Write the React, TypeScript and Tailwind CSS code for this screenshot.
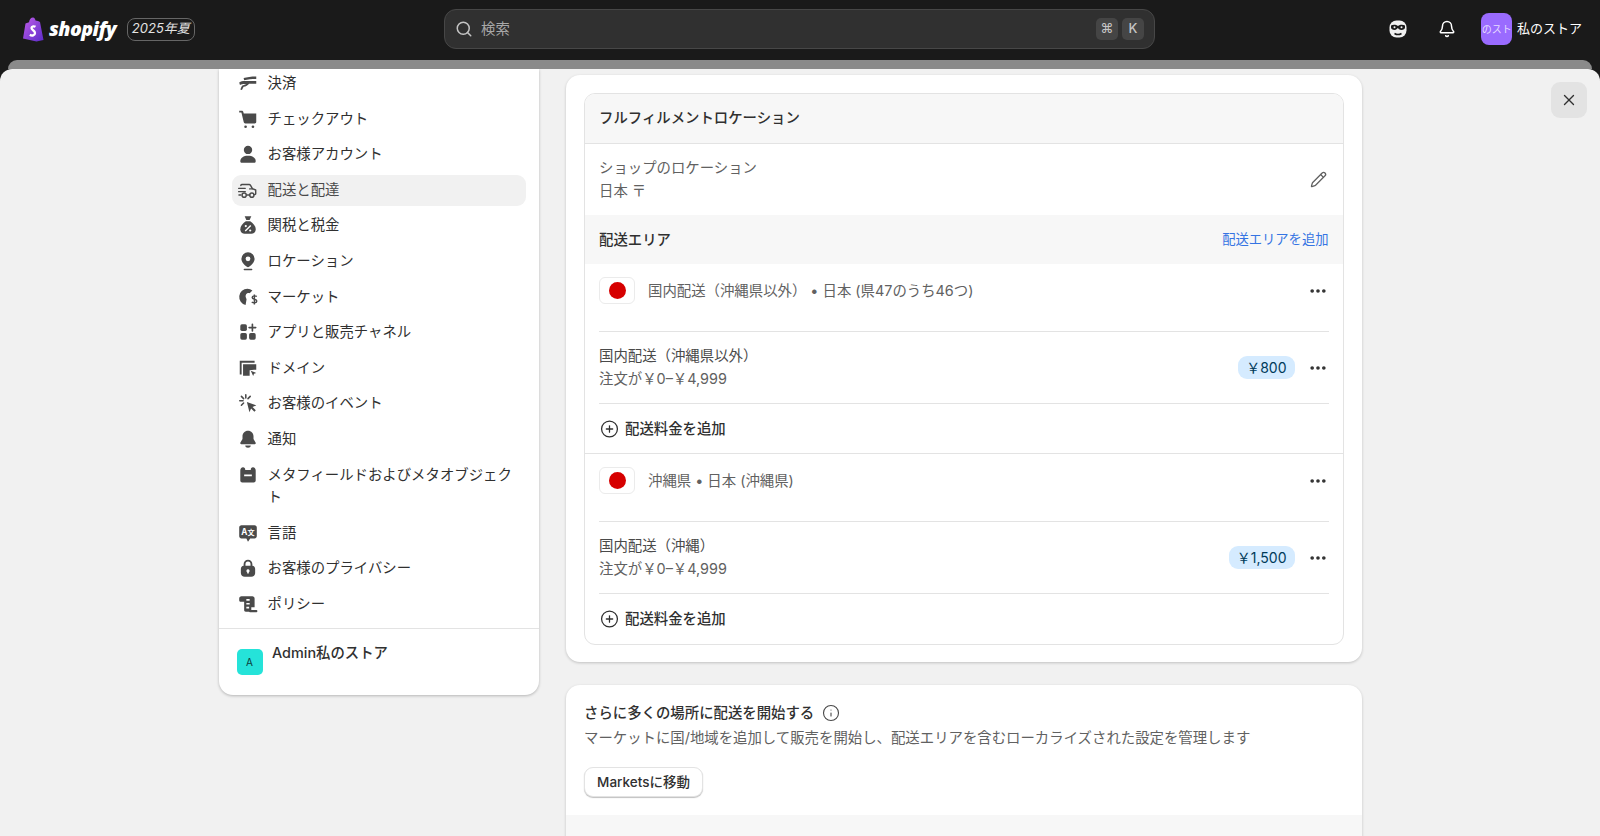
import { ReactNode } from 'react'
import { Search, Bell, X, Pencil, Ellipsis, CirclePlus, Info } from 'lucide-react'

const C = '#4a4a4a'

function Ico({ children }: { children: ReactNode }) {
  return (
    <svg viewBox="0 0 20 20" className="h-[22px] w-[22px] shrink-0" fill={C}>
      {children}
    </svg>
  )
}

const icons: Record<string, ReactNode> = {
  payment: (
    <Ico>
      <path d="M6 5.500c3-1 7-1.500 11.500-1.500v2.300c-4 0-7.500.3-11 1.200z" />
      <path d="M2 9.500c1.500-1 3-1.300 5-1.300h10.500v2.400H11c-1 1.500-3 2.400-5 2.800l-1.500 3-1.500-.6 1.500-3.400 4-1.600H7c-1.800 0-3 .3-4.300 1z" />
    </Ico>
  ),
  cart: (
    <Ico>
      <path d="M2 2.500h2.300c.7 0 1.200.4 1.400 1l.4 1.500h11.400v7.500c0 .8-.6 1.500-1.500 1.500H7.500c-.7 0-1.300-.5-1.400-1.200L4 4.200H2z" />
      <circle cx="7.800" cy="17" r="1.200" />
      <circle cx="14.500" cy="17" r="1.200" />
    </Ico>
  ),
  person: (
    <Ico>
      <circle cx="10" cy="6.300" r="3.800" />
      <path d="M3 16.500c0-3.200 3-5 7-5s7 1.800 7 5c0 .8-.6 1.500-1.500 1.500h-11C3.600 18 3 17.300 3 16.500z" />
    </Ico>
  ),
  truck: (
    <Ico>
      <g fill="none" stroke={C} strokeWidth="1.300" strokeLinecap="round" strokeLinejoin="round">
        <path d="M3.500 6V5.800c0-.5.400-.8.800-.8H11c.6 0 1 .3 1.300.8l1.700 3 3 1.200v3.500c0 .4-.3.7-.7.700h-.8" />
        <path d="M1.500 8.500h6M1.500 11.500h6M11.500 9H14" />
        <path d="M8.800 14.500h2.700M1.800 14.500h1.700" />
        <circle cx="6.500" cy="14.700" r="1.900" />
        <circle cx="13.500" cy="14.700" r="1.900" />
      </g>
    </Ico>
  ),
  bag: (
    <Ico>
      <path d="M7 2h6l-1.500 3.500h-3z" />
      <path d="M8 6.500h4c3 1.800 5 4.500 5 7.500 0 2.500-2 4-4 4H7c-2 0-4-1.500-4-4 0-3 2-5.700 5-7.500z" />
      <path d="M12.500 10.500l-5 5" stroke="#fff" strokeWidth="1.300" />
      <circle cx="8" cy="11" r="1" fill="#fff" />
      <circle cx="12" cy="15" r="1" fill="#fff" />
    </Ico>
  ),
  pin: (
    <Ico>
      <path fillRule="evenodd" d="M10 2a6 6 0 0 1 6 6c0 3-2.500 5.500-5 7.300-.6.400-1.400.4-2 0C6.500 13.500 4 11 4 8a6 6 0 0 1 6-6zm0 3.800a2.200 2.200 0 1 0 0 4.400 2.200 2.200 0 0 0 0-4.400z" />
      <rect x="6" y="17" width="8" height="1.500" rx=".7" />
    </Ico>
  ),
  globe: (
    <Ico>
      <path d="M9.500 2.500a7.500 7.500 0 0 1 4.500 1.500l-2.500 2.500c-1.300-.3-2.500.1-3.200 1.100-.9 1.400-.4 2.900.4 4.400l-.9 5.300A7.500 7.500 0 0 1 9.500 2.500z" />
      <path d="M18 9.500c-1-.8-4.200-.9-4.200 1 0 1.900 4.200 1.200 4.200 3.200 0 1.900-3.300 1.800-4.600.8M15.800 7.800v9" fill="none" stroke={C} strokeWidth="1.300" />
    </Ico>
  ),
  apps: (
    <Ico>
      <rect x="3" y="3" width="6" height="6" rx="1.500" />
      <rect x="3" y="11" width="6" height="6" rx="1.500" />
      <rect x="11" y="11" width="6" height="6" rx="1.500" />
      <path d="M14 3v6M11 6h6" stroke={C} strokeWidth="1.500" strokeLinecap="round" />
    </Ico>
  ),
  domain: (
    <Ico>
      <path d="M2.500 3.500h13.500v1.700H4.200V16H2.500z" />
      <path d="M5.500 6.500h12v5h-2l-4 .5v5h-6z" />
      <path d="M12.500 12.500l5 2-2 .8-.8 2z" />
    </Ico>
  ),
  cursor: (
    <Ico>
      <path d="M9 9l8.500 3.200-3.400 1.500 3 3-1.300 1.300-3-3-1.500 3.400z" />
      <path d="M8 2.500v3M2.500 8h3M4 4l2 2M12 4l-2 2M4 12l2-2" stroke={C} strokeWidth="1.400" strokeLinecap="round" />
    </Ico>
  ),
  bell: (
    <Ico>
      <path d="M10 2.500c3 0 5 2.300 5 5v2.500l2 3.500c.3.600-.1 1.200-.8 1.200H3.800c-.7 0-1.100-.6-.8-1.200L5 10V7.500c0-2.700 2-5 5-5z" />
      <path d="M7.500 16h5c0 1.300-1.100 2-2.500 2s-2.500-.7-2.500-2z" />
    </Ico>
  ),
  meta: (
    <Ico>
      <path fillRule="evenodd" d="M5.500 3C6.800 3 7.500 4 7.500 5.500h5C12.500 4 13.200 3 14.500 3 16 3 17 4.200 17 6v9c0 1-.8 1.800-1.800 1.800H4.800C3.800 16.800 3 16 3 15V6c0-1.800 1-3 2.500-3zm1 6.500v1.700h7V9.500z" />
    </Ico>
  ),
  lang: (
    <Ico>
      <path d="M4 3h12c1.100 0 2 .9 2 2v8c0 1.100-.9 2-2 2h-4l-2 3-1.500-3H4c-1.100 0-2-.9-2-2V5c0-1.100.9-2 2-2z" />
      <text x="3.800" y="12" fontSize="7.500" fontWeight="700" fill="#fff" fontFamily="Inter">A</text>
      <text x="9.500" y="12" fontSize="6.500" fontWeight="700" fill="#fff" fontFamily="Noto Sans CJK JP">文</text>
    </Ico>
  ),
  lock: (
    <Ico>
      <path fillRule="evenodd" d="M6 8V6.500a4 4 0 0 1 8 0V8c1.500.2 2.500 1.200 2.500 2.800v3.700c0 2-1.500 3.500-3.500 3.500H7c-2 0-3.500-1.500-3.500-3.500v-3.700C3.500 9.200 4.500 8.200 6 8zm1.700-.1h4.600V6.500a2.300 2.300 0 0 0-4.600 0zM10 11.200a1.500 1.500 0 0 0-.7 2.800v1h1.400v-1a1.500 1.500 0 0 0-.7-2.800z" />
    </Ico>
  ),
  policy: (
    <Ico>
      <path fillRule="evenodd" d="M2 5c0-1.100.9-2 2-2h10c1.100 0 2 .9 2 2v8h-3v2.500c0 1-.5 1.500-1.500 1.500H8c-1 0-1.500-.7-1.500-1.500V8H3.500C2.700 8 2 7.300 2 6.500zm6.500.5v1.500h3V5.500zm0 3.500v1.500h3V9zm0 3.500V14H11v-1.500z" />
      <rect x="11" y="15.500" width="7.500" height="2" rx=".8" />
    </Ico>
  ),
}

const navItems = [
  { icon: 'payment', label: '決済' },
  { icon: 'cart', label: 'チェックアウト' },
  { icon: 'person', label: 'お客様アカウント' },
  { icon: 'truck', label: '配送と配達', active: true },
  { icon: 'bag', label: '関税と税金' },
  { icon: 'pin', label: 'ロケーション' },
  { icon: 'globe', label: 'マーケット' },
  { icon: 'apps', label: 'アプリと販売チャネル' },
  { icon: 'domain', label: 'ドメイン' },
  { icon: 'cursor', label: 'お客様のイベント' },
  { icon: 'bell', label: '通知' },
  { icon: 'meta', label: 'メタフィールドおよびメタオブジェクト' },
  { icon: 'lang', label: '言語' },
  { icon: 'lock', label: 'お客様のプライバシー' },
  { icon: 'policy', label: 'ポリシー' },
]

function ShopifyLogo() {
  return (
    <svg viewBox="0 0 22 25" className="h-[25px] w-[22px]">
      <defs>
        <linearGradient id="bag" x1="0" y1="0" x2="1" y2="1">
          <stop offset="0" stopColor="#c05ce8" />
          <stop offset="1" stopColor="#5b2bc9" />
        </linearGradient>
      </defs>
      <path d="M1 21.500 3.500 6.500 7 5.200C7.500 2.500 9 .5 11 .5c1.500 0 2.300 1.500 2.500 3L16 4l2 1 3.500 18-7 1.500z" fill="url(#bag)" />
      <path d="M13.500 9.800c-1-.6-4-.9-4 1.300 0 2 3.500 2.300 3.500 4.800 0 2.600-3 3.200-5.200 1.900" fill="none" stroke="#fff" strokeWidth="2.300" />
    </svg>
  )
}

function SidekickIcon() {
  return (
    <svg viewBox="0 0 20 20" className="h-[20px] w-[20px]">
      <rect x="1.500" y="1.500" width="17" height="17" rx="7" fill="#f1f1f1" />
      <path d="M3 6.500c2-1 5-1 7 .5 2-1.500 5-1.500 7-.5v2c0 1.500-1.500 2.500-3.500 2.500S10 9.500 10 9s-1.500 2-3.500 2S3 10 3 8.500z" fill="#1a1a1a" />
      <path d="M6.500 14.500c2 1.200 5 1.200 7 0" stroke="#1a1a1a" strokeWidth="1.600" fill="none" />
      <circle cx="6.500" cy="8.300" r="1" fill="#f1f1f1" />
      <circle cx="13.500" cy="8.300" r="1" fill="#f1f1f1" />
    </svg>
  )
}

function Kbd({ children }: { children: ReactNode }) {
  return (
    <span className="flex h-[22px] w-[22px] items-center justify-center rounded-[5px] bg-[#454545] text-[13px] font-medium text-[#c4c4c4]">
      {children}
    </span>
  )
}

function TopBar() {
  return (
    <div className="flex h-[60px] shrink-0 items-center bg-[#1a1a1a] pb-[2px] pl-[22px] pr-[18px]">
      <div className="flex w-[422px] items-center">
        <ShopifyLogo />
        <span className="ml-[5px] font-['Open_Sans',sans-serif] text-[19.500px] leading-none font-extrabold tracking-[-0.5px] text-white italic">
          shopify
        </span>
        <span className="ml-[10.500px] flex h-[23px] w-[68.500px] items-center justify-center rounded-[8px] border border-[#666] text-[13px] text-[#e3e3e3] italic">
          2025年夏
        </span>
      </div>
      <div className="flex h-[40px] w-[711px] items-center rounded-[12px] border border-[#474747] bg-[#303030] pl-[10px] pr-[10px]">
        <Search className="h-[18px] w-[18px] text-[#c4c4c4]" strokeWidth={2} />
        <span className="ml-[8px] flex-1 text-[14.400px] text-[#a8a8a8]">検索</span>
        <div className="flex gap-[4px]">
          <Kbd>⌘</Kbd>
          <Kbd>K</Kbd>
        </div>
      </div>
      <div className="ml-auto flex items-center">
        <SidekickIcon />
        <Bell className="ml-[30px] h-[18px] w-[18px] text-white" strokeWidth={2} />
        <div className="ml-[25px] flex h-[31.500px] w-[31.500px] items-center justify-center overflow-hidden rounded-[8px] bg-[#9a6bff] text-[10px] whitespace-nowrap text-[#e6dcff]">
          のスト
        </div>
        <span className="ml-[4.500px] text-[13px] text-white">私のストア</span>
      </div>
    </div>
  )
}

function NavRow({ icon, label, active }: { icon: string; label: string; active?: boolean }) {
  return (
    <div
      className={`mx-[13px] flex items-start gap-[9px] rounded-[9px] py-[4.300px] pl-[5px] pr-[6px] ${active ? 'bg-[#f1f1f1] text-[#4a4a4a]' : 'text-[#303030]'}`}
    >
      {icons[icon]}
      <span className="leading-[22.400px]">{label}</span>
    </div>
  )
}

function Sidebar() {
  return (
    <div className="h-fit w-[320.500px] shrink-0 rounded-b-[14px] bg-white shadow-[0_1px_3px_rgba(0,0,0,0.25)]">
      <div className="-mt-[0.700px] flex flex-col gap-[4.600px] pb-[8.300px]">
        {navItems.map((item) => (
          <NavRow key={item.label} {...item} />
        ))}
      </div>
      <div className="flex h-[67px] gap-[9.500px] border-t border-[#e3e3e3] pl-[18px] pt-[20.500px]">
        <span className="flex h-[26px] w-[26px] items-center justify-center rounded-[5px] bg-[#25e3d9] text-[10px] text-[#0b3b3a]">
          A
        </span>
        <span className="-mt-[7.500px] leading-[22.400px] font-medium text-[#303030]">Admin私のストア</span>
      </div>
    </div>
  )
}

function Flag() {
  return (
    <span className="flex h-[27px] w-[36px] shrink-0 items-center justify-center rounded-[6px] border border-[#ebebeb] bg-white">
      <span className="h-[17px] w-[17px] rounded-full bg-[#d60000]" />
    </span>
  )
}

function Dots() {
  return <Ellipsis className="h-[20px] w-[20px] text-[#303030]" strokeWidth={2.400} />
}

function ZoneRow({ title }: { title: string }) {
  return (
    <div className="flex h-[68px] items-start border-b border-[#e3e3e3] pt-[13px]">
      <Flag />
      <span className="ml-[13px] leading-[27px] text-[#616161]">{title}</span>
      <span className="ml-auto mt-[4px] mr-[0.500px]">
        <Dots />
      </span>
    </div>
  )
}

function RateRow({ name, price }: { name: string; price: string }) {
  return (
    <div className="flex h-[72px] items-center border-b border-[#e3e3e3]">
      <div className="pt-[0.600px] leading-[22.400px]">
        <div className="text-[#4a4a4a]">{name}</div>
        <div className="text-[#616161]">注文が￥0–￥4,999</div>
      </div>
      <span className="ml-auto flex h-[23.500px] items-center rounded-[9px] bg-[#d5ebff] px-[8px] text-[14px] text-[#003a5a]">
        {price}
      </span>
      <span className="ml-[13.500px] mr-[0.500px]">
        <Dots />
      </span>
    </div>
  )
}

function AddRate() {
  return (
    <div className="flex h-[49px] items-center gap-[6px] text-[#303030]">
      <CirclePlus className="h-[20px] w-[20px] pl-[1px]" strokeWidth={1.600} />
      <span className="font-medium">配送料金を追加</span>
    </div>
  )
}

function ZoneGroup({ zone, rate, price, last }: { zone: string; rate: string; price: string; last?: boolean }) {
  return (
    <div className={`px-[14px] ${last ? 'pb-[1px]' : 'border-b border-[#e3e3e3]'}`}>
      <ZoneRow title={zone} />
      <RateRow name={rate} price={price} />
      <AddRate />
    </div>
  )
}

function FulfillmentCard() {
  return (
    <div className="rounded-[14px] bg-white px-[18px] pt-[18px] pb-[17px] shadow-[0_1px_3px_rgba(0,0,0,0.2)]">
      <div className="overflow-hidden rounded-[11px] border border-[#e3e3e3]">
        <div className="flex h-[50.500px] items-center border-b border-[#e3e3e3] bg-[#f7f7f7] px-[14px] font-medium text-[#303030]">
          フルフィルメントロケーション
        </div>
        <div className="flex h-[71px] items-center justify-between px-[14px]">
          <div className="pt-[0.600px] leading-[22.400px] text-[#616161]">
            <div>ショップのロケーション</div>
            <div>日本 〒</div>
          </div>
          <Pencil className="mr-[2px] h-[17px] w-[17px] text-[#616161]" strokeWidth={1.800} />
        </div>
        <div className="flex h-[49px] items-center justify-between bg-[#f7f7f7] px-[14px]">
          <span className="font-medium text-[#303030]">配送エリア</span>
          <span className="text-[13.300px] text-[#3574e3]">配送エリアを追加</span>
        </div>
        <ZoneGroup zone="国内配送（沖縄県以外） • 日本 (県47のうち46つ)" rate="国内配送（沖縄県以外）" price="￥800" />
        <ZoneGroup zone="沖縄県 • 日本 (沖縄県)" rate="国内配送（沖縄）" price="￥1,500" last />
      </div>
    </div>
  )
}

function MarketsCard() {
  return (
    <div className="mt-[23px] overflow-hidden rounded-t-[14px] bg-white shadow-[0_1px_3px_rgba(0,0,0,0.2)]">
      <div className="h-[130px] px-[18px] pt-[17px]">
        <div className="flex items-center gap-[8px] leading-[22.400px] font-medium text-[#303030]">
          さらに多くの場所に配送を開始する
          <Info className="h-[18px] w-[18px] text-[#4a4a4a]" strokeWidth={1.500} />
        </div>
        <div className="mt-[3px] leading-[22.400px] text-[#616161]">
          マーケットに国/地域を追加して販売を開始し、配送エリアを含むローカライズされた設定を管理します
        </div>
        <button
          type="button"
          className="mt-[17px] h-[30px] w-[119px] rounded-[9px] border border-[#e3e3e3] bg-white text-[13.500px] font-medium text-[#303030] shadow-[0_1px_1px_rgba(0,0,0,0.25)]"
        >
          Marketsに移動
        </button>
      </div>
      <div className="h-[40px] bg-[#f7f7f7]" />
    </div>
  )
}

export default function App() {
  return (
    <div className="flex h-screen flex-col overflow-hidden bg-[#1a1a1a] font-['Inter','Noto_Sans_CJK_JP',sans-serif] text-[14.400px] [text-spacing-trim:space-all]">
      <TopBar />
      <div className="mx-[8px] h-[8.500px] shrink-0 rounded-t-[10px] bg-[#8a8a8a]" />
      <div className="relative flex min-h-0 flex-1 gap-[27px] overflow-hidden rounded-t-[12px] bg-[#f1f1f1] pl-[218.500px]">
        <Sidebar />
        <div className="w-[795.500px] shrink-0 pt-[6px]">
          <FulfillmentCard />
          <MarketsCard />
        </div>
        <button
          type="button"
          className="absolute top-[13px] right-[13px] flex h-[36px] w-[36px] items-center justify-center rounded-[9px] bg-[#e3e3e3]"
        >
          <X className="h-[18px] w-[18px] text-[#303030]" strokeWidth={1.800} />
        </button>
      </div>
    </div>
  )
}
